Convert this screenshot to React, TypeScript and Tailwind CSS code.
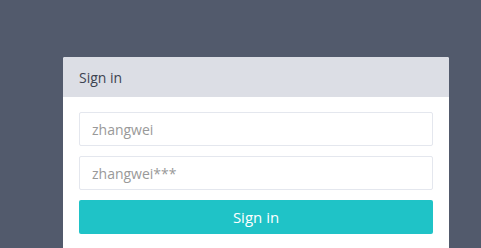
export default function App() {
  return (
    <div
      className="h-[248px] w-full overflow-hidden bg-[#525a6c] pt-[57px] pl-[63px]"
      style={{ fontFamily: '"Open Sans", sans-serif' }}
    >
      <div className="w-[386px] overflow-hidden rounded-t-[2px] bg-white">
        <div className="flex h-[40px] items-center bg-[#dcdee5] px-4 text-[14px] text-[#3d4350]">
          Sign in
        </div>
        <div className="flex flex-col gap-[10px] p-4 pt-[15px]">
          <input
            className="h-[34px] w-full rounded-[2px] border border-[#e4e7ee] px-[12px] text-[14px] text-[#555] outline-none placeholder:text-[#999]"
            placeholder="zhangwei"
          />
          <input
            className="h-[34px] w-full rounded-[2px] border border-[#e4e7ee] px-[12px] text-[14px] text-[#555] outline-none placeholder:text-[#999]"
            placeholder="zhangwei***"
          />
          <button className="h-[34px] w-full rounded-[2px] bg-[#1fc3c7] text-[15px] text-white">
            Sign in
          </button>
        </div>
      </div>
    </div>
  );
}
